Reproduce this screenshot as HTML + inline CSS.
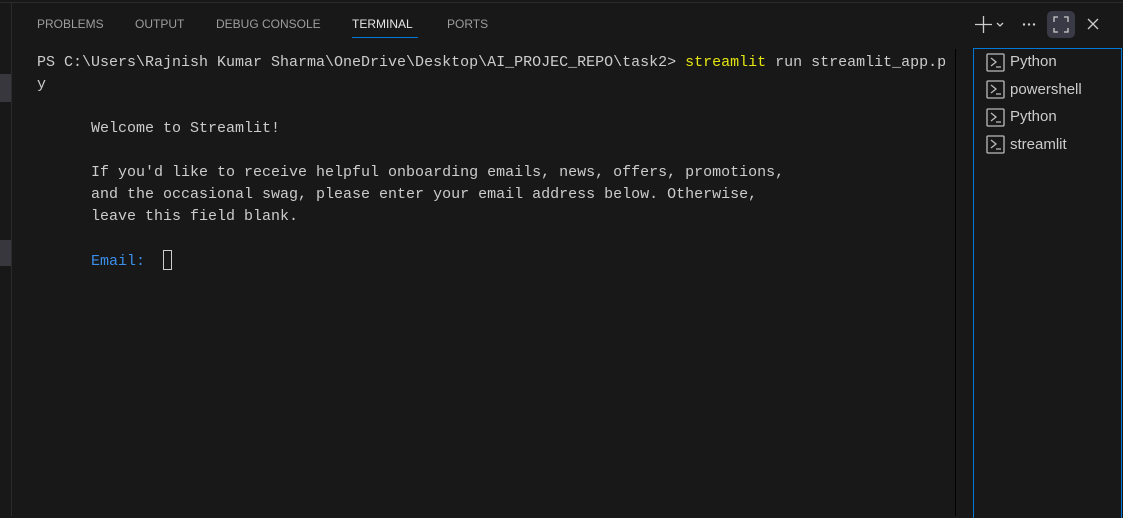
<!DOCTYPE html>
<html><head><meta charset="utf-8"><style>
*{margin:0;padding:0;box-sizing:border-box}
body{width:1123px;height:516px;background:#181818;overflow:hidden;position:relative;font-family:"Liberation Sans",sans-serif;color:#ccc}
.topline{position:absolute;left:0;top:2px;width:1123px;height:1px;background:#2b2b2b}
.gutter{position:absolute;left:11px;top:3px;width:1px;height:513px;background:#2b2b2b}
.mark{position:absolute;left:0;width:11px;background:#37373d}
.tab{position:absolute;top:17px;font-size:12px;color:#9d9d9d;letter-spacing:0}
.tab.act{color:#e7e7e7}
.uline{position:absolute;top:37px;height:1px;background:#0078d4}
.term{position:absolute;left:37px;top:52px;font-family:"Liberation Mono",monospace;font-size:15px;line-height:22px;color:#cccccc;white-space:pre}
.y{color:#e5e510}
.b{color:#3b8eea}
.cur{display:inline-block;width:9px;height:20px;border:1px solid #ccc;vertical-align:-5px}
.vline{position:absolute;left:955px;top:49px;width:1px;height:467px;background:#000}
.list{position:absolute;left:973px;top:48px;width:149px;height:470px;border:1px solid #0078d4;border-bottom:none}
.item{position:absolute;font-size:15px;color:#cccccc}
.icons{position:absolute;top:0;left:0}
.maxbtn{position:absolute;left:1047px;top:11px;width:28px;height:27px;background:#3a3a46;border-radius:5px}
</style></head><body>
<div class="topline"></div>
<div class="gutter"></div>
<div class="mark" style="top:74px;height:28px"></div>
<div class="mark" style="top:240px;height:26px"></div>
<div class="tab" style="left:37px">PROBLEMS</div>
<div class="tab" style="left:135px">OUTPUT</div>
<div class="tab" style="left:216px">DEBUG CONSOLE</div>
<div class="tab act" style="left:352px">TERMINAL</div>
<div class="tab" style="left:447px">PORTS</div>
<div class="uline" style="left:352px;width:66px"></div>
<div class="maxbtn"></div>
<svg class="icons" width="1123" height="50">
<g stroke="#cccccc" stroke-width="1.3" fill="none">
<path d="M975 24.5h17M983.5 16v17"/>
<path d="M997 23l3 3 3-3"/>
<path d="M1054 22v-5h4M1064 17h4v5M1068 28v4h-4M1058 32h-4v-4"/>
<path d="M1088 19l10 10M1098 19l-10 10"/>
</g>
<g fill="#cccccc"><circle cx="1024" cy="24.5" r="1.2"/><circle cx="1029" cy="24.5" r="1.2"/><circle cx="1034" cy="24.5" r="1.2"/></g>
</svg>
<div class="term">PS C:\Users\Rajnish Kumar Sharma\OneDrive\Desktop\AI_PROJEC_REPO\task2> <span class="y">streamlit</span> run streamlit_app.p
y

      Welcome to Streamlit!

      If you'd like to receive helpful onboarding emails, news, offers, promotions,
      and the occasional swag, please enter your email address below. Otherwise,
      leave this field blank.

      <span class="b">Email:</span>  <span class="cur"></span></div>
<div class="vline"></div>
<div class="list">
<svg width="30" height="120" style="position:absolute;left:12px;top:4px" fill="none" stroke="#bbb" stroke-width="1.3">
<rect x="1" y="1" width="17" height="17" rx="1"/><path d="M5 5l5 4-5 4M10 14h5"/>
<rect x="1" y="28" width="17" height="17" rx="1"/><path d="M5 32l5 4-5 4M10 41h5"/>
<rect x="1" y="56" width="17" height="17" rx="1"/><path d="M5 60l5 4-5 4M10 69h5"/>
<rect x="1" y="83" width="17" height="17" rx="1"/><path d="M5 87l5 4-5 4M10 96h5"/>
</svg>
<div class="item" style="left:36px;top:4px">Python</div>
<div class="item" style="left:36px;top:32px">powershell</div>
<div class="item" style="left:36px;top:59px">Python</div>
<div class="item" style="left:36px;top:87px">streamlit</div>
</div>
</body></html>
